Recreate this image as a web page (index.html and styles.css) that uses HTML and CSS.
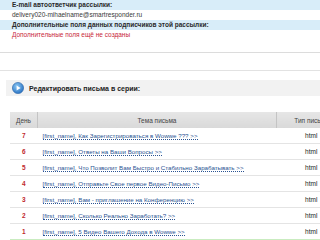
FILE: index.html
```html
<!DOCTYPE html>
<html lang="ru">
<head>
    <meta charset="UTF-8">
    <title>Автоответчик рассылки</title>
    <link rel="stylesheet" href="styles.css">
</head>
<body>

    <div class="info">
        <div class="info-row info-head">E-mail автоответчик рассылки:</div>
        <div class="info-row">delivery020-mihaelname@smartresponder.ru</div>
        <div class="info-row info-head">Дополнительные поля данных подписчиков этой рассылки:</div>
        <div class="info-row info-empty">Дополнительные поля ещё не созданы</div>
    </div>

    <div class="divider"></div>

    <div class="section-title">
        <svg class="play-icon" width="12" height="12" viewBox="0 0 12 12">
            <defs>
                <radialGradient id="ball" cx="40%" cy="35%" r="65%">
                    <stop offset="0" stop-color="#8cc8f4"/>
                    <stop offset="1" stop-color="#2c75c4"/>
                </radialGradient>
            </defs>
            <circle cx="6" cy="6" r="5.6" fill="url(#ball)" stroke="#2a64a8" stroke-width="0.6"/>
            <path d="M4.6 3.4 L8.6 6 L4.6 8.6 Z" fill="#fff"/>
        </svg>
        <span>Редактировать письма в серии:</span>
    </div>

    <table class="letters">
        <thead>
            <tr>
                <th class="col-day">День</th>
                <th class="col-subject">Тема письма</th>
                <th class="col-type">Тип письма</th>
            </tr>
        </thead>
        <tbody>
            <tr>
                <td class="col-day">7</td>
                <td class="col-subject"><a href="#">[first_name], Как Зарегистрироваться в Wowwe ??? &gt;&gt;</a></td>
                <td class="col-type">html</td>
            </tr>
            <tr>
                <td class="col-day">6</td>
                <td class="col-subject"><a href="#">[first_name], Ответы на Ваши Вопросы &gt;&gt;</a></td>
                <td class="col-type">html</td>
            </tr>
            <tr>
                <td class="col-day">5</td>
                <td class="col-subject"><a href="#">[first_name], Что Позволит Вам Быстро и Стабильно Зарабатывать &gt;&gt;</a></td>
                <td class="col-type">html</td>
            </tr>
            <tr>
                <td class="col-day">4</td>
                <td class="col-subject"><a href="#">[first_name], Отправьте Свое первое Видео-Письмо &gt;&gt;</a></td>
                <td class="col-type">html</td>
            </tr>
            <tr>
                <td class="col-day">3</td>
                <td class="col-subject"><a href="#">[first_name], Вам - приглашение на Конференцию &gt;&gt;</a></td>
                <td class="col-type">html</td>
            </tr>
            <tr>
                <td class="col-day">2</td>
                <td class="col-subject"><a href="#">[first_name], Сколько Реально Заработать? &gt;&gt;</a></td>
                <td class="col-type">html</td>
            </tr>
            <tr class="last-row">
                <td class="col-day">1</td>
                <td class="col-subject"><a href="#">[first_name], 5 Видео Вашего Дохода в Wowwe &gt;&gt;</a></td>
                <td class="col-type">html</td>
            </tr>
        </tbody>
    </table>

</body>
</html>
```

FILE: styles.css
```css
body {
    margin: 0;
    width: 320px;
    height: 240px;
    overflow: hidden;
    background-color: #fff;
    font-family: "Liberation Sans", Arial, sans-serif;
    font-size: 6.5px;
    color: #3a3a3a;
}

.info-row {
    height: 10px;
    line-height: 10px;
    padding-left: 12px;
    white-space: nowrap;
}

.info-head {
    background-color: #d8edf9;
    font-weight: bold;
    color: #2a2a2a;
}

.info-empty {
    color: #c8283a;
}

.divider {
    margin-top: 12px;
    height: 17px;
    border-top: 1px solid #dcdcdc;
    border-bottom: 1px solid #e2e2e2;
}

.section-title {
    margin-top: 9px;
    margin-left: 6px;
    height: 16px;
    background-color: #f2f2f2;
    display: flex;
    align-items: center;
    gap: 5px;
    padding-left: 6px;
    font-weight: bold;
    font-size: 7px;
    color: #222;
}

.play-icon {
    display: block;
}

.letters {
    margin-top: 16px;
    margin-left: 10px;
    width: 336px;
    border-collapse: collapse;
    table-layout: fixed;
}

.letters th {
    height: 16px;
    padding: 0;
    font-weight: normal;
    color: #444;
    background: linear-gradient(#e6e6e6, #d9d9d9);
    border-left: 1px solid #c4c4c4;
}

.letters th:first-child {
    border-left: none;
}

.letters td {
    height: 15px;
    padding: 0;
    border-bottom: 1px solid #e4e4e4;
    white-space: nowrap;
    overflow: hidden;
}

.letters .last-row td {
    border-bottom: 2px solid #c9ecc0;
}

.col-day {
    width: 27px;
    text-align: center;
}

td.col-day {
    color: #c0282e;
    font-weight: bold;
}

.col-subject {
    width: 238px;
    text-align: center;
}

td.col-subject {
    text-align: left;
    padding-left: 5px;
    font-size: 6.2px;
}

.col-type {
    text-align: center;
}

td.col-type {
    color: #222;
}

.letters a {
    color: #2a5392;
    text-decoration: none;
    border-bottom: 1px dotted #2a5392;
}
```
